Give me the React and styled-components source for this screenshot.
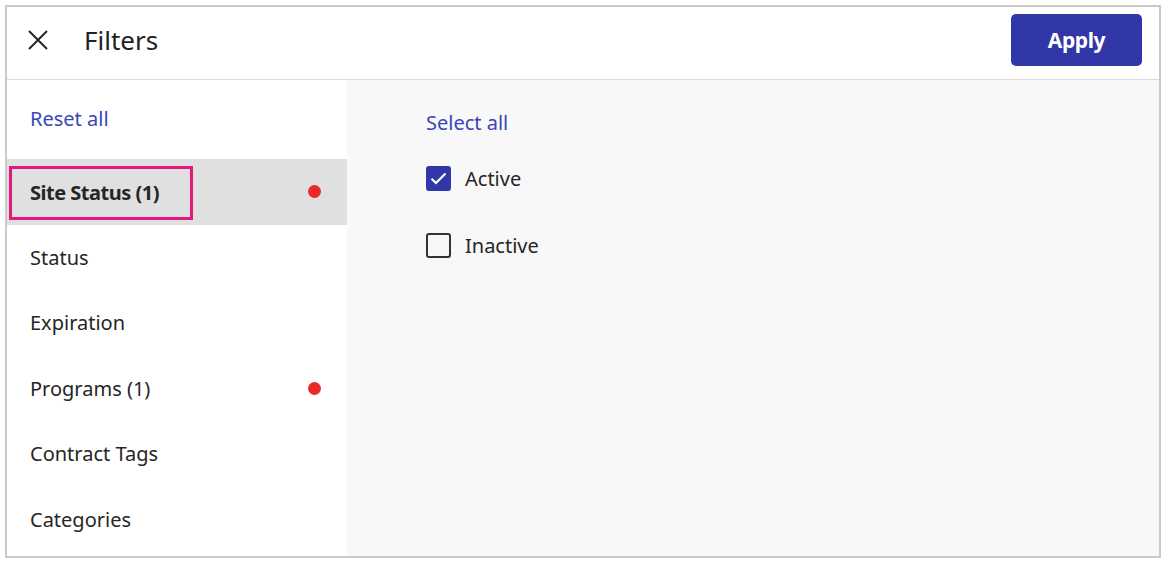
import React, { useState } from 'react';
import styled, { createGlobalStyle } from 'styled-components';

const GlobalStyle = createGlobalStyle`
  html, body {
    margin: 0;
    padding: 0;
    background: #ffffff;
  }
  body {
    font-family: "Noto Sans", "Open Sans", sans-serif;
    color: #262626;
  }
  * { box-sizing: border-box; }
`;

const Page = styled.div`
  padding: 5px 0 0 5px;
`;

const Frame = styled.div`
  width: 1156px;
  height: 553px;
  border: 2px solid #c9c9c9;
  display: flex;
  flex-direction: column;
  background: #ffffff;
`;

const Header = styled.header`
  height: 73px;
  flex: none;
  border-bottom: 1px solid #dcdcdc;
  display: flex;
  align-items: center;
  padding: 0 17px 6px 19px;
`;

const CloseButton = styled.button`
  border: none;
  background: transparent;
  padding: 0;
  width: 24px;
  height: 24px;
  display: flex;
  align-items: center;
  justify-content: center;
  color: #262626;
  cursor: pointer;
`;

const Title = styled.h1`
  margin: 0 0 0 34px;
  font-size: 26px;
  font-weight: 400;
  color: #222222;
  flex: 1;
`;

const ApplyButton = styled.button`
  width: 131px;
  height: 52px;
  margin-top: -1px;
  border: none;
  border-radius: 5px;
  background: #3137a6;
  color: #ffffff;
  font-family: inherit;
  font-size: 21px;
  font-weight: 700;
  letter-spacing: -0.4px;
  cursor: pointer;
`;

const Body = styled.div`
  flex: 1;
  display: flex;
  min-height: 0;
`;

const Sidebar = styled.nav`
  width: 340px;
  flex: none;
  background: #ffffff;
  display: flex;
  flex-direction: column;
`;

const LinkButton = styled.button`
  border: none;
  background: transparent;
  padding: 0;
  font-family: inherit;
  font-size: 20px;
  color: #3a46b5;
  text-align: left;
  cursor: pointer;
`;

const ResetRow = styled.div`
  height: 79px;
  display: flex;
  align-items: center;
  padding-left: 23px;
  padding-bottom: 3px;
`;

const NavItem = styled.div`
  height: 65.5px;
  display: flex;
  align-items: center;
  justify-content: space-between;
  padding: 0 26px 0 23px;
  background: ${p => (p.$active ? '#e0e0e0' : 'transparent')};
  font-size: 20px;
  font-weight: ${p => (p.$active ? 700 : 400)};
  letter-spacing: ${p => (p.$active ? '-0.5px' : '0')};
  cursor: pointer;
`;

const NavLabel = styled.span`
  ${p => p.$highlight && `
    margin-left: -21px;
    margin-top: 2px;
    padding: 10px 31px 11px 18px;
    border: 3px solid #e3197f;
  `}
`;

const Dot = styled.span`
  width: 13px;
  height: 13px;
  border-radius: 50%;
  background: #ea2a2a;
`;

const Content = styled.section`
  flex: 1;
  background: #f8f8f8;
  padding: 29px 0 0 79px;
  display: flex;
  flex-direction: column;
  align-items: flex-start;
`;

const OptionList = styled.div`
  margin-top: 29px;
  display: flex;
  flex-direction: column;
  gap: 40px;
`;

const Option = styled.label`
  display: flex;
  align-items: center;
  gap: 14px;
  font-size: 20px;
  cursor: pointer;
`;

const Box = styled.span`
  width: 25px;
  height: 25px;
  border-radius: 3px;
  display: flex;
  align-items: center;
  justify-content: center;
  background: ${p => (p.$checked ? '#3137a6' : 'transparent')};
  border: 2px solid ${p => (p.$checked ? '#3137a6' : '#333333')};
`;

const CloseIcon = () => (
  <svg width="22" height="22" viewBox="0 0 22 22" fill="none" stroke="currentColor" strokeWidth="2">
    <path d="M2 2 L20 20 M20 2 L2 20" />
  </svg>
);

const CheckIcon = () => (
  <svg width="17" height="13" viewBox="0 0 17 13" fill="none" stroke="#ffffff" strokeWidth="2.2">
    <path d="M1.5 6.8 L6 11 L15.5 1.5" />
  </svg>
);

const categories = [
  { name: 'Site Status (1)', dot: true },
  { name: 'Status' },
  { name: 'Expiration' },
  { name: 'Programs (1)', dot: true },
  { name: 'Contract Tags' },
  { name: 'Categories' },
];

export default function App() {
  const [active, setActive] = useState(0);
  const [checked, setChecked] = useState({ Active: true, Inactive: false });

  const toggle = key => setChecked(c => ({ ...c, [key]: !c[key] }));

  return (
    <Page>
      <GlobalStyle />
      <Frame>
        <Header>
          <CloseButton aria-label="Close"><CloseIcon /></CloseButton>
          <Title>Filters</Title>
          <ApplyButton>Apply</ApplyButton>
        </Header>
        <Body>
          <Sidebar>
            <ResetRow>
              <LinkButton>Reset all</LinkButton>
            </ResetRow>
            {categories.map((c, i) => (
              <NavItem key={c.name} $active={i === active} onClick={() => setActive(i)}>
                <NavLabel $highlight={i === 0}>{c.name}</NavLabel>
                {c.dot && <Dot />}
              </NavItem>
            ))}
          </Sidebar>
          <Content>
            <LinkButton>Select all</LinkButton>
            <OptionList>
              {['Active', 'Inactive'].map(k => (
                <Option key={k} onClick={() => toggle(k)}>
                  <Box $checked={checked[k]}>{checked[k] && <CheckIcon />}</Box>
                  {k}
                </Option>
              ))}
            </OptionList>
          </Content>
        </Body>
      </Frame>
    </Page>
  );
}
